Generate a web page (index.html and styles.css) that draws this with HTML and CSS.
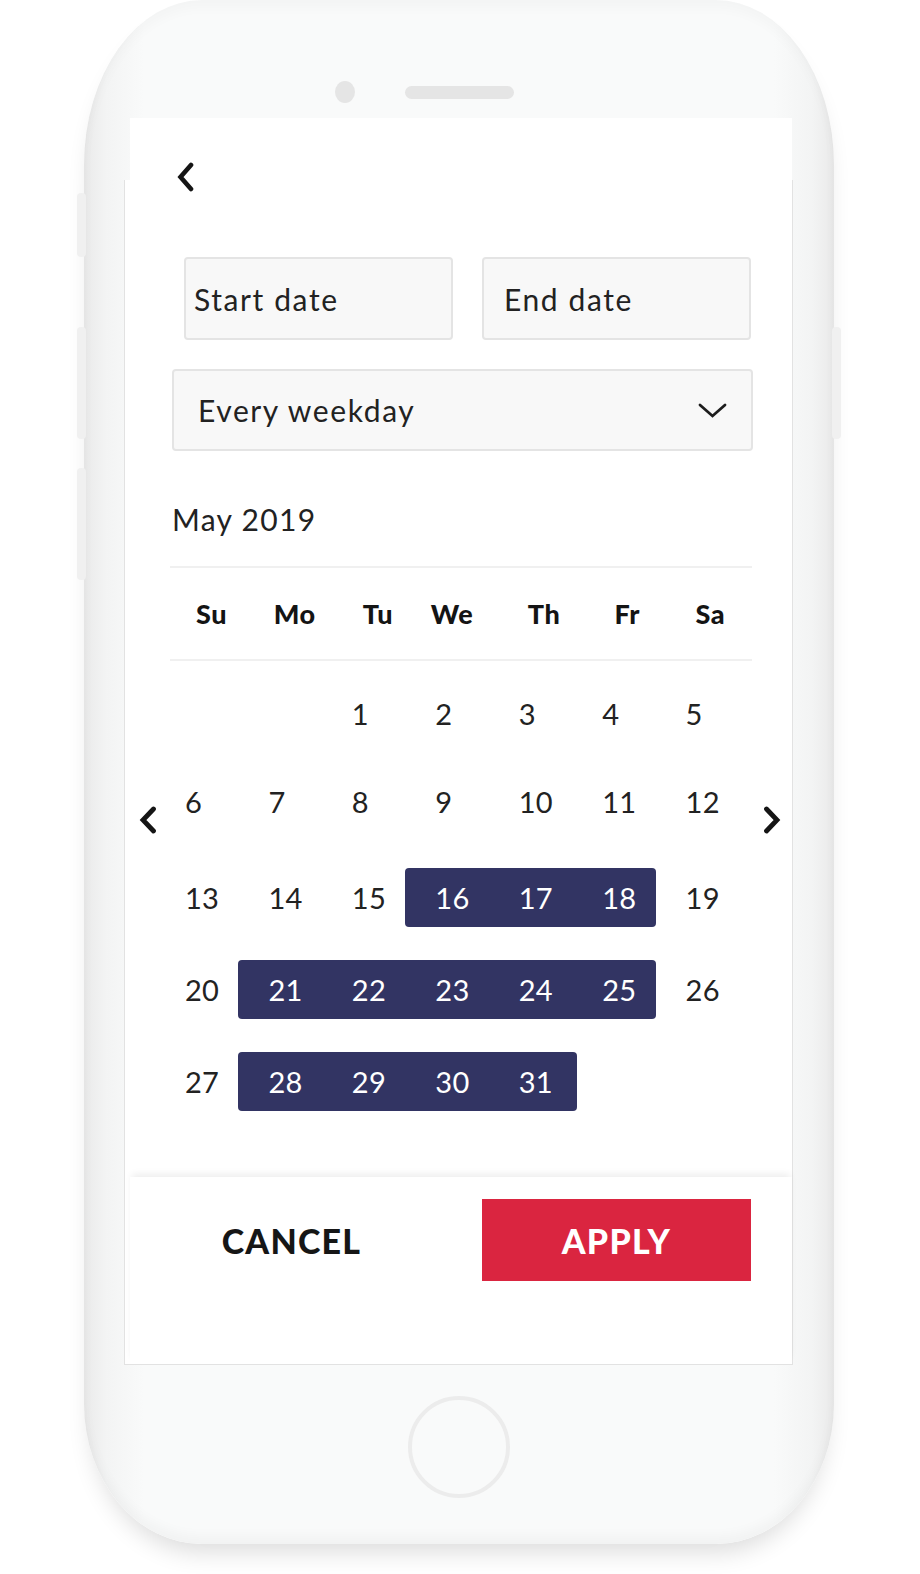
FILE: index.html
```html
<!DOCTYPE html>
<html lang="en">
<head>
<meta charset="utf-8">
<title>Date range picker</title>
<link rel="stylesheet" href="styles.css">
</head>
<body>
<div class="stage">
  <div class="phone">
    <span class="side side-l1"></span>
    <span class="side side-l2"></span>
    <span class="side side-l3"></span>
    <span class="side side-r1"></span>

    <div class="bezel-top">
      <span class="camera"></span>
      <span class="speaker"></span>
    </div>

    <div class="screen">
      <div class="content">
        <div class="back-row">
          <svg class="back" viewBox="0 0 18 30" width="18" height="30"><path d="M15 3 L4.5 15 L15 27" fill="none" stroke="#151515" stroke-width="4.6" stroke-linecap="round" stroke-linejoin="miter"/></svg>
        </div>

        <div class="date-row">
          <div class="field field-start">Start date</div>
          <div class="field field-end">End date</div>
        </div>

        <div class="select">
          <span>Every weekday</span>
          <svg class="caret" viewBox="0 0 29 15" width="29" height="15"><path d="M2 2 L14.5 13 L27 2" fill="none" stroke="#1d1d1d" stroke-width="2.8" stroke-linecap="round"/></svg>
        </div>

        <div class="month">May 2019</div>

        <div class="weekdays">
          <span>Su</span><span>Mo</span><span>Tu</span><span class="wd-we">We</span><span>Th</span><span>Fr</span><span>Sa</span>
        </div>

        <div class="cal-body">
          <svg class="nav nav-prev" viewBox="0 0 19 28" width="19" height="28"><path d="M15.5 3 L5 14 L15.5 25" fill="none" stroke="#151515" stroke-width="4.8" stroke-linecap="round"/></svg>
          <div class="days">
            <div class="week">
              <span class="day"></span><span class="day"></span><span class="day">1</span><span class="day">2</span><span class="day">3</span><span class="day">4</span><span class="day">5</span>
            </div>
            <div class="week week-2">
              <span class="day">6</span><span class="day">7</span><span class="day">8</span><span class="day">9</span><span class="day">10</span><span class="day">11</span><span class="day">12</span>
            </div>
            <div class="week week-3">
              <span class="day">13</span><span class="day">14</span><span class="day">15</span><span class="day sel sel-start">16</span><span class="day sel">17</span><span class="day sel sel-end">18</span><span class="day">19</span>
            </div>
            <div class="week">
              <span class="day">20</span><span class="day sel sel-start">21</span><span class="day sel">22</span><span class="day sel">23</span><span class="day sel">24</span><span class="day sel sel-end">25</span><span class="day">26</span>
            </div>
            <div class="week">
              <span class="day">27</span><span class="day sel sel-start">28</span><span class="day sel">29</span><span class="day sel">30</span><span class="day sel sel-end sel-short">31</span><span class="day"></span><span class="day"></span>
            </div>
          </div>
          <svg class="nav nav-next" viewBox="0 0 19 28" width="19" height="28"><path d="M3.5 3 L14 14 L3.5 25" fill="none" stroke="#151515" stroke-width="4.8" stroke-linecap="round"/></svg>
        </div>
      </div>

      <div class="footer">
        <div class="btn cancel">CANCEL</div>
        <div class="btn apply">APPLY</div>
      </div>
    </div>

    <div class="bezel-bottom">
      <span class="home"></span>
    </div>
  </div>
</div>
</body>
</html>
```

FILE: styles.css
```css
html, body {
  margin: 0;
  padding: 0;
  background: #ffffff;
}

body {
  width: 920px;
  height: 1574px;
  overflow: hidden;
  font-family: Lato, "Open Sans", sans-serif;
  color: #222222;
}

.stage {
  padding-left: 84px;
}

.phone {
  position: relative;
  z-index: 0;
  width: 750px;
  height: 1544px;
  border-radius: 118px / 165px 165px 140px 140px;
  background: linear-gradient(to right, #eaeaea 0, #f3f4f4 3%, #f9fafa 8%, #f9fafa 92%, #f3f4f4 97%, #eaeaea 100%);
  box-shadow: 0 16px 24px -8px rgba(0, 0, 0, 0.14), inset 0 8px 12px rgba(0, 0, 0, 0.025), inset 0 -8px 12px rgba(0, 0, 0, 0.03);
}

.side {
  position: absolute;
  width: 9px;
  background: #f0f0f0;
  border-radius: 4px;
  z-index: -1;
}

.side-l1 { left: -7px; top: 193px; height: 64px; }
.side-l2 { left: -7px; top: 327px; height: 112px; }
.side-l3 { left: -7px; top: 468px; height: 112px; }
.side-r1 { right: -7px; top: 327px; height: 112px; }

.bezel-top {
  height: 118px;
  box-sizing: border-box;
  padding: 66px 0 0 251px;
  display: flex;
  align-items: center;
}

.camera {
  width: 20px;
  height: 22px;
  border-radius: 50%;
  background: #e5e5e5;
}

.speaker {
  margin-left: 50px;
  width: 109px;
  height: 13px;
  border-radius: 7px;
  background: #e5e5e5;
}

.screen {
  position: relative;
  margin-left: 46px;
  width: 662px;
  height: 1246px;
  background: #ffffff;
  display: flex;
  flex-direction: column;
}

.screen::before {
  content: "";
  position: absolute;
  left: -6px;
  top: 62px;
  right: -1px;
  bottom: -1px;
  border: 1px solid #e2e2e2;
  border-top: none;
  background: #ffffff;
  z-index: -1;
}

.content {
  flex: 1;
  padding-top: 44px;
}

.back-row {
  height: 30px;
  padding-left: 46px;
}

.back {
  display: block;
}

.date-row {
  display: flex;
  margin: 65px 0 0 54px;
}

.field {
  box-sizing: border-box;
  height: 83px;
  width: 269px;
  border: 2px solid #e4e4e4;
  border-radius: 4px;
  background: #f8f8f8;
  display: flex;
  align-items: center;
  font-size: 30px;
  letter-spacing: 1.6px;
  color: #222;
}

.field-start {
  padding-left: 8px;
}

.field-end {
  margin-left: 29px;
  padding-left: 20px;
}

.select {
  box-sizing: border-box;
  margin: 29px 0 0 42px;
  width: 581px;
  height: 82px;
  border: 2px solid #e4e4e4;
  border-radius: 4px;
  background: #f8f8f8;
  display: flex;
  align-items: center;
  justify-content: space-between;
  padding: 0 24px 0 24px;
  font-size: 30px;
  letter-spacing: 1.6px;
}

.caret {
  display: block;
}

.month {
  margin: 50px 0 0 42px;
  height: 36px;
  line-height: 36px;
  font-size: 30px;
  letter-spacing: 1.3px;
}

.weekdays {
  box-sizing: border-box;
  margin: 29px 0 0 40px;
  width: 582px;
  height: 95px;
  border-top: 2px solid #f0f0f0;
  border-bottom: 2px solid #f0f0f0;
  display: grid;
  grid-template-columns: repeat(7, 1fr);
  align-items: center;
  justify-items: center;
  font-weight: 900;
  font-size: 27px;
  letter-spacing: 0.6px;
  color: #141414;
}

.wd-we {
  margin-right: 18px;
}

.cal-body {
  display: flex;
  align-items: flex-start;
  margin-top: 23px;
  padding-left: 8px;
}

.nav {
  display: block;
  flex: none;
  margin-top: 122px;
}

.nav-prev {
  margin-right: -2px;
}

.nav-next {
  margin-left: 24px;
}

.days {
  width: 584px;
  display: flex;
  flex-direction: column;
}

.week {
  display: grid;
  grid-template-columns: repeat(7, 1fr);
}

.week + .week {
  margin-top: 33px;
}

.week.week-2 {
  margin-top: 29px;
}

.week.week-3 {
  margin-top: 37px;
}

.day {
  height: 59px;
  display: flex;
  align-items: center;
  padding-left: 30px;
  font-size: 29px;
  letter-spacing: 0.3px;
  color: #222;
}

.day.sel {
  background: #323463;
  color: #ffffff;
}

.day.sel-start {
  border-radius: 4px 0 0 4px;
}

.day.sel-end {
  border-radius: 0 4px 4px 0;
}

.day.sel-short {
  margin-right: -5px;
}

.footer {
  position: relative;
  height: 187px;
  box-sizing: border-box;
  padding-top: 22px;
  display: flex;
  align-items: flex-start;
  background: #ffffff;
  box-shadow: 0 -5px 7px -2px rgba(0, 0, 0, 0.07);
}

.btn {
  height: 82px;
  display: flex;
  align-items: center;
  justify-content: center;
  font-weight: 900;
  font-size: 34px;
  letter-spacing: 1.2px;
}

.cancel {
  width: 323px;
  color: #161616;
}

.apply {
  width: 269px;
  margin-left: 29px;
  background: #da2540;
  color: #ffffff;
}

.bezel-bottom {
  padding-top: 32px;
  display: flex;
  justify-content: center;
}

.home {
  box-sizing: border-box;
  width: 102px;
  height: 102px;
  border-radius: 50%;
  border: 4px solid #ececec;
}
```
